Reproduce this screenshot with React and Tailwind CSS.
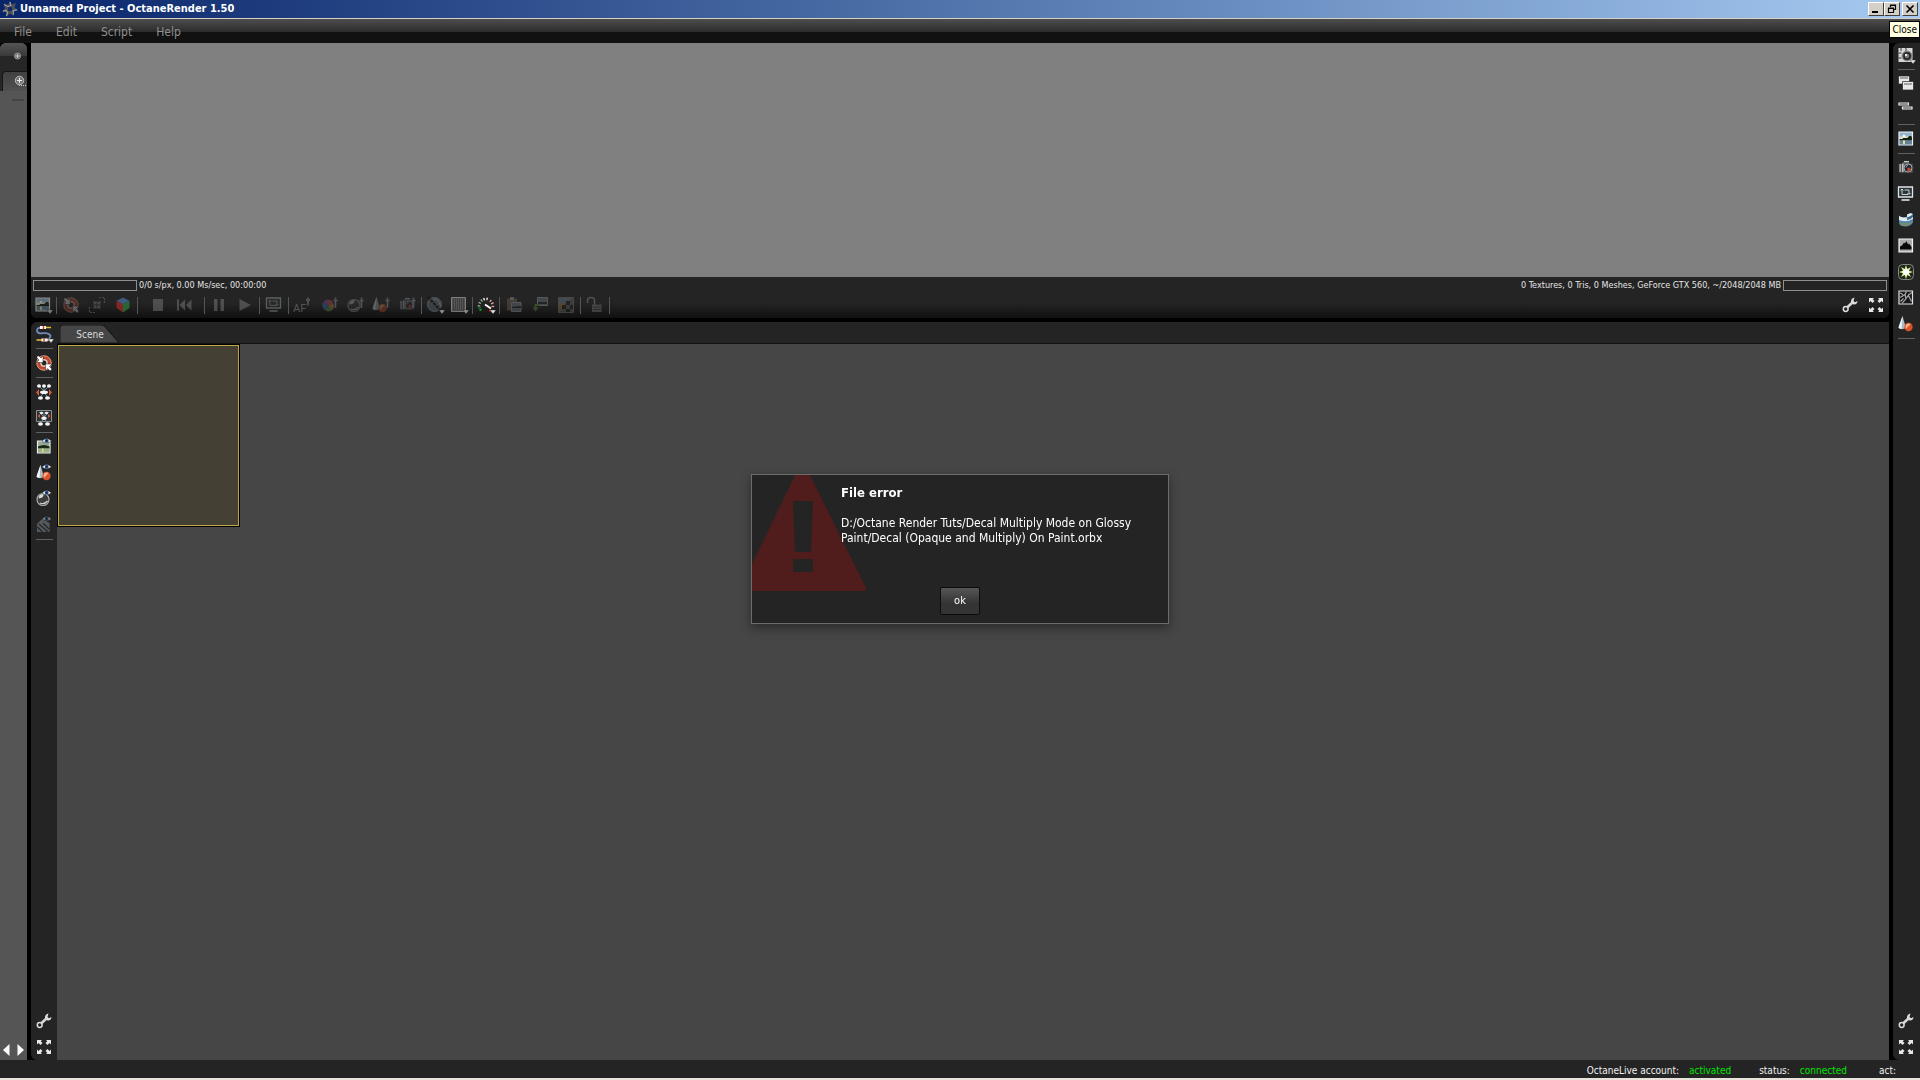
const Icon = ({ children, className = "" }) => (
  <svg viewBox="0 0 24 24" className={`h-6 w-6 shrink-0 ${className}`} aria-hidden="true">
    {children}
  </svg>
);

const Caret = () => <path d="M16 17h6l-3 4z" fill="#e8e8e8" stroke="#222" strokeWidth=".4" />;

const Eye = () => (
  <g>
    <path d="M10 6Q14.500 1 19.500 6Q14.500 9.500 10 6Z" fill="#f4f4f4" stroke="#222" strokeWidth=".5" />
    <circle cx="14.700" cy="5.700" r="1.900" fill="#24508f" />
    <circle cx="14.700" cy="5.700" r=".8" fill="#0a1020" />
  </g>
);

const Cone = ({ dx = 0 }) => (
  <g transform={`translate(${dx} 0)`}>
    <path d="M8.500 4L4.500 15.500Q7.500 18.500 12 16Z" fill="#a9bcc6" />
    <path d="M8.500 4L4.500 15.500Q5.500 17 7.500 17Z" fill="#eef5f8" />
    <circle cx="14.500" cy="15" r="4.200" fill="#d9532a" />
    <path d="M11.500 14a3.500 3.500 0 0 1 5-2l-4.500 5z" fill="#f7b08c" />
  </g>
);

const Picker = () => (
  <path d="M18.500 4.500v2M16.500 7.500h4M18.500 8v7" stroke="#b9c6d0" strokeWidth="1.600" fill="none" />
);

const Landscape = () => (
  <g>
    <path d="M5 5h13.500v13H5z" fill="#93b5cf" stroke="#f0f0f0" strokeWidth="1.200" />
    <path d="M5.600 9.500h12.300V12H5.600z" fill="#dfe3c4" />
    <path d="M5.600 12h2.700l1-1h4l2-2h2l.600 1.500v3H5.600z" fill="#15210f" />
    <path d="M5.600 13.500h12.300v3.900H5.600z" fill="#64849a" />
    <path d="M9 13.500h2V17H9z" fill="#e6dc9a" />
    <circle cx="10" cy="9" r="1.300" fill="#fff" />
  </g>
);

const Target = () => (
  <g>
    <circle cx="12" cy="12" r="5.800" fill="none" stroke="#c9482b" strokeWidth="3" />
    <circle cx="12" cy="12" r="7.300" fill="none" stroke="#f2b5a0" strokeWidth=".8" />
    <circle cx="12" cy="12" r="3.200" fill="none" stroke="#f0c9ba" strokeWidth="1.500" />
    <path
      d="M5 5h2L9 7l2-2v6.500H4.500L7 9 5 7zM19.500 19.500h-2l-2-2-2 2V13H20l-2.500 2.500 2 2z"
      fill="#fff"
      stroke="#222"
      strokeWidth=".5"
    />
  </g>
);

const Monitor = () => (
  <g fill="none" stroke="#dfe4e8">
    <path d="M4.500 5h14v10h-14z" fill="#2b3439" strokeWidth="1.300" />
    <path d="M8 7v5.500h6M6.700 8.500L8 7l1.300 1.500M10.500 8H15v4M13.500 11l1.500 1.500 1.500-1.500" strokeWidth=".9" />
    <path d="M7.500 18h8" strokeWidth="1.600" />
  </g>
);

const Camera = () => (
  <g>
    <path d="M5 7.500h3L9.500 5h5L16 7.500h3V17H5z" fill="#55585a" stroke="#2c2d2e" />
    <path d="M5.500 8h1.200v8H5.500zM8 7.500h1.500V16H8zM10 5h5v1.300h-5z" fill="#c5c5c5" />
    <circle cx="14" cy="12" r="4" fill="#1d242c" stroke="#a9a9a9" />
    <circle cx="15" cy="13.500" r="1.900" fill="#b9482e" />
    <path d="M12 11.500a2 2 0 0 1 2-2" stroke="#7fa4ca" fill="none" />
  </g>
);

const Ball = () => (
  <g>
    <circle cx="11" cy="12.500" r="6" fill="#3b3c3e" stroke="#aaa" strokeWidth="1.200" />
    <path d="M6.500 11.500a5 5 0 0 1 5-4.500q.5 4-5 4.500z" fill="#d9d9d9" />
    <path d="M8 16q4 2 7.500-2" stroke="#d0d0d0" fill="none" strokeWidth="1.300" />
  </g>
);

const Nodes = ({ boxed }) => (
  <g>
    {boxed && <path d="M4.500 4.500h15v11h-15z" fill="#303030" stroke="#8f8f8f" />}
    <path d="M12 6v6M7 6l5 5 5-5M12 12l-4 6M12 12l4 6" stroke="#6d8a99" fill="none" />
    <g fill="#f4f4f4">
      {!boxed && <ellipse cx="7" cy="6" rx="2" ry="1.700" />}
      {!boxed && <ellipse cx="12" cy="6" rx="2" ry="1.700" />}
      {!boxed && <ellipse cx="17" cy="6" rx="2" ry="1.700" />}
      {boxed && <ellipse cx="9.500" cy="7" rx="1.600" ry="1.200" />}
      {boxed && <ellipse cx="14.500" cy="7" rx="1.600" ry="1.200" />}
      <ellipse cx="12" cy="12.300" rx={boxed ? 2.8 : 4} ry="1.800" />
      <ellipse cx="8.500" cy="18" rx="2.500" ry="1.800" />
      <ellipse cx="15.500" cy="18" rx="2.500" ry="1.800" />
    </g>
    <path
      d={boxed ? "M8 8v4L5.500 10zM16 8v4l2.500-2z" : "M7 9v7l-3-3.500zM17 9v7l3-3.500z"}
      fill="#d4583f"
    />
  </g>
);

const icons = {
  preview: <><Landscape /><Caret /></>,
  target: <Target />,
  shrink: (
    <g fill="none" stroke="#a9a9a9" strokeWidth="1.200">
      <path d="M14 4.500h5.500V10M4.500 14v5.500H10" strokeDasharray="2 1" />
      <path d="M8.500 8.500l2 2M15.500 8.500l-2 2M8.500 15.500l2-2M15.500 15.500l-2-2M11 8.500V11H8.500M13 8.500V11h2.500M11 15.500V13H8.500M13 15.500V13h2.500" />
    </g>
  ),
  cube: (
    <g>
      <path d="M12 4.500l6.500 3.200-6.500 3.600-6.500-3.600z" fill="#4d80bd" />
      <path d="M5.500 7.700l6.500 3.600V19.500l-6.500-4.500z" fill="#c42c2c" />
      <path d="M18.500 7.700L12 11.300V19.500l6.500-4.500z" fill="#2c9645" />
    </g>
  ),
  stop: <path d="M7 6h10v12H7z" fill="#b5b5b5" />,
  rewind: <path d="M5 6.500h2v11H5zM13 6.500v11L7.500 12zM19.500 6.500v11L14 12z" fill="#b5b5b5" />,
  pause: <path d="M7 6h3.500v12H7zM13.500 6H17v12h-3.500z" fill="#b5b5b5" />,
  play: <path d="M6.500 6L18 12 6.500 18z" fill="#b5b5b5" />,
  monitor: <Monitor />,
  focus: (
    <g>
      <text x="2" y="19" fontSize="11" fill="#d0d0d0" fontFamily="Roboto">AF</text>
      <path d="M17 4.500v8M15 7h4" stroke="#a8bac8" strokeWidth="1.800" />
    </g>
  ),
  wheel: (
    <g>
      <path d="M11 12.500v-6a6 6 0 0 0-5 3z" fill="#b04cc4" />
      <path d="M11 12.500v-6a6 6 0 0 1 5.500 4z" fill="#d95858" />
      <path d="M11 12.500l5.500-2a6 6 0 0 1-2 7z" fill="#d8a042" />
      <path d="M11 12.500l3.500 5a6 6 0 0 1-6 0z" fill="#52b552" />
      <path d="M11 12.500l-2.500 5a6 6 0 0 1-2.500-8z" fill="#4983cf" />
      <Picker />
    </g>
  ),
  ballPick: <><Ball /><Picker /></>,
  conePick: <><Cone dx={-1} /><Picker /></>,
  cameraPick: <><Camera /><Picker /></>,
  clay: (
    <g>
      <circle cx="11.500" cy="11.500" r="7" fill="#4d565e" stroke="#747b82" />
      <path d="M5 4l14 15" stroke="#151515" strokeWidth="2" strokeDasharray="3 1" />
      <path d="M10 6q6 0 7.500 7" stroke="#8996a2" fill="none" />
      <Caret />
    </g>
  ),
  alpha: (
    <g>
      <path d="M4.500 4.500h14v14h-14z" fill="#555" stroke="#bbb" />
      <path
        d="M5 6h13M5 8h13M5 10h13M5 12h13M5 14h13M5 16h13M6 18h12"
        stroke="#999"
        strokeDasharray="1 1"
      />
      <Caret />
    </g>
  ),
  gauge: (
    <g fill="none" strokeWidth="2.600">
      <path d="M7 17.500a7 7 0 0 1-1.500-3" stroke="#16a52e" strokeDasharray="1.500 1" />
      <path d="M5 13.500a7 7 0 0 1 3.500-6.500" stroke="#8abc98" strokeDasharray="1.300 1.700" />
      <path d="M9.500 6.500a7 7 0 0 1 5.500 0" stroke="#f0f0f0" strokeDasharray="1.300 1.700" />
      <path d="M16 7.500a7 7 0 0 1 2.500 8" stroke="#e3a0a0" strokeDasharray="1.300 1.700" />
      <path d="M11 11.500l6 4" stroke="#fff" strokeWidth="2" />
      <path d="M15 17.500h2" stroke="#d22" strokeWidth="2" />
      <Caret />
    </g>
  ),
  paste: (
    <g>
      <path d="M5 5.500h10v12H5z" fill="#8b7960" />
      <path d="M8 4h4v3H8z" fill="#ccc" />
      <path d="M9.500 9.500h9.500v9H9.500z" fill="#8799a4" stroke="#ccc" />
      <path d="M10 14l9-1v2h-9z" fill="#222" />
    </g>
  ),
  load: (
    <g>
      <path d="M9.500 4.500h10v8h-10z" fill="#8799a4" stroke="#ccc" />
      <path d="M10 9h9v2h-9z" fill="#222" />
      <path d="M12 12H7.500v3" stroke="#70b04b" strokeWidth="2" fill="none" />
      <path d="M4.500 14.500h6l-3 4z" fill="#70b04b" />
    </g>
  ),
  texture: (
    <g>
      <path d="M4.500 4.500h15v15h-15z" fill="#777" stroke="#999" />
      <path d="M5 5h14L5 15z" fill="#89a7b6" />
      <path d="M5 12l8-3-8 10z" fill="#c59a35" />
      <path d="M12 8h4v4h-4zM16 12h3v4h-3zM12 16h4v3h-4zM8 12h4v4H8z" fill="#202020" />
    </g>
  ),
  unlock: (
    <g>
      <path d="M4.500 10V7.500a3.500 3 0 0 1 7 0V12" fill="none" stroke="#bbb" strokeWidth="1.500" />
      <path d="M9 11.500h9.500V19H9z" fill="#999" />
      <path d="M10 14h7.500M10 16.500h7.500" stroke="#555" />
    </g>
  ),
  wrench: (
    <g>
      <path d="M8.500 15L15 9" stroke="#d6d6d6" strokeWidth="2.600" />
      <circle cx="7.700" cy="16" r="2.400" fill="#222" stroke="#dcdcdc" strokeWidth="1.500" />
      <path
        d="M16.500 4.500Q12.500 5.500 13 9l2.500 2.500Q19 12 19.500 8L17 9.200 15.500 8z"
        fill="#dcdcdc"
      />
    </g>
  ),
  expand: (
    <path
      d="M5 5h5L8.700 6.300 10.500 8 8.500 10 6.500 8 5 9.500zM19 5v4.500L17.500 8l-2 2-2-2 1.800-1.700L14 5zM5 19v-4.500L6.500 16l2-2 2 2-1.800 1.700L10 19zM19 19h-5l1.300-1.300L13.500 16l2-2 2 2 1.500-1.500z"
      fill="#e8e8e8"
    />
  ),
  cable: (
    <g fill="none">
      <path d="M9 5.500Q4.500 6 5 9t6 2.200 7.500 2.300Q18.500 17 14 18" stroke="#7189b8" strokeWidth="1.800" />
      <path d="M4.500 18h13M9 5.500h10" stroke="#e8c03a" strokeWidth="1.600" />
      <path d="M8 5.500h6M9.500 18h6" stroke="#fff" strokeWidth="3" />
      <path d="M11.500 4v3M12 16.500v3" stroke="#d43a2a" strokeWidth="1.500" />
      <Caret />
    </g>
  ),
  nodes: <Nodes />,
  nodesBoxed: <Nodes boxed />,
  eyeImage: (
    <g>
      <path d="M5.500 6H18v12H5.500z" fill="#94aa96" stroke="#e9eee9" strokeWidth="1.200" />
      <path d="M6 11.500q6-3 11.500 0v2H6z" fill="#1a2a14" />
      <path d="M6 13.500h11.500v4H6z" fill="#9db08c" />
      <path d="M10 13.500h1.500v4H10z" fill="#dcd98d" />
      <Eye />
    </g>
  ),
  eyeCone: <><Cone /><Eye /></>,
  eyeBall: <><Ball /><Eye /></>,
  eyeMesh: (
    <g>
      <path d="M5 11l5-5 7.500 4v9H5z" fill="#8b8f92" />
      <path d="M7 11l9 8M11 10l6 6M5.500 14l5 5" stroke="#27313d" strokeWidth="1.600" />
      <Eye />
    </g>
  ),
  renderView: (
    <g>
      <path d="M4.500 5h14v14h-14z" fill="#d7d7d7" />
      <path d="M7 5v3M12 5v3M4.500 10h3M4.500 15h3M8 13l3-4" stroke="#333" />
      <circle cx="13" cy="13" r="5" fill="#444" stroke="#999" />
      <circle cx="13" cy="13" r="3" fill="#777" stroke="#111" />
      <circle cx="12" cy="12" r="1.200" fill="#eee" />
      <Caret />
    </g>
  ),
  windows: (
    <g stroke="#222" strokeWidth=".7">
      <path d="M4.500 4h11v8h-11z" fill="#e8e8e8" />
      <path d="M6 6h8" />
      <path d="M8.500 9.500h11v8.500h-11z" fill="#e8e8e8" />
      <path d="M10 12h8" />
    </g>
  ),
  bars: (
    <g fill="#333" stroke="#f0f0f0" strokeWidth="1.200">
      <path d="M5 5h9.500v2H5z" />
      <path d="M8.500 9H18v2H8.500z" />
    </g>
  ),
  image: <Landscape />,
  camera: <Camera />,
  panorama: (
    <g>
      <path d="M5 8.500q3 3 14-2.500v8.500q-3 4.500-8.500 4T5 14.500z" fill="#4f86ad" />
      <path d="M5 7.500q2 2.500 8 2V6.500l3.500-1.500 2.500 1v5q-7 4-14 1z" fill="#dfeaf0" />
      <path d="M13 9.500q4-1 6-3.500v3q-2 2.500-6 3z" fill="#3f6685" />
      <path d="M5.500 14.500q6 2 13-1-3 4.500-7.500 4.500t-5.500-3.500z" fill="#7c8b68" />
    </g>
  ),
  histogram: (
    <g>
      <path d="M5 5h13.500v13H5z" fill="#aaa" stroke="#f0f0f0" strokeWidth="1.200" />
      <path d="M6 15.500v-3l2-1 2-3 1 1L12.500 7l1.500 3.500 1-1 2.500 3.500v2.500z" fill="#080808" />
    </g>
  ),
  flare: (
    <g>
      <rect x="4.500" y="4.500" width="15" height="15" rx="4" fill="#20261c" stroke="#858a80" />
      <path
        d="M12 5l1.300 4L17 7l-2 3.700 4 1.300-4 1.300 2 3.700-3.700-2L12 19l-1.300-4L7 17l2-3.700L5 12l4-1.300L7 7l3.700 2z"
        fill="#dff5a5"
      />
      <circle cx="12" cy="12" r="2.800" fill="#fff" />
    </g>
  ),
  kernel: (
    <g>
      <path d="M5 5h13.500v13H5z" fill="#15171a" stroke="#e2e2e2" strokeWidth="1.200" />
      <path
        d="M6 7l3 1.500M6 11.500l5-3L12.500 5.500M11 8.500l1 4-4 5M12 12.500l3-4 3-2M14.500 9.500l3 6M6.500 15.500l3-3"
        stroke="#aaa"
        fill="none"
        strokeWidth="1.200"
      />
    </g>
  ),
  cone: <Cone />,
};

const viewportTools = [
  { icon: "preview", label: "Preview", menu: true, dim: "opacity-50" },
  "sep",
  { icon: "target", label: "Recenter view" },
  { icon: "shrink", label: "Reset zoom" },
  { icon: "cube", label: "Reset camera", dim: "opacity-60" },
  "sep",
  { icon: "stop", label: "Stop", space: "ml-1.5" },
  { icon: "rewind", label: "Restart", space: "mr-1.5" },
  "sep",
  { icon: "pause", label: "Pause" },
  { icon: "play", label: "Play" },
  "sep",
  { icon: "monitor", label: "Resolution lock" },
  "sep",
  { icon: "focus", label: "Focus picker" },
  { icon: "wheel", label: "White balance picker" },
  { icon: "ballPick", label: "Material picker" },
  { icon: "conePick", label: "Object picker" },
  { icon: "cameraPick", label: "Camera picker" },
  "sep",
  { icon: "clay", label: "Clay mode", menu: true, dim: "opacity-60" },
  { icon: "alpha", label: "Sub sampling", menu: true, dim: "opacity-60" },
  "sep",
  { icon: "gauge", label: "Priority", menu: true, dim: "opacity-100" },
  "sep",
  { icon: "paste", label: "Copy image" },
  { icon: "load", label: "Save image" },
  { icon: "texture", label: "Background image" },
  "sep",
  { icon: "unlock", label: "Lock viewport" },
  "sep",
];

const graphTools = [
  { icon: "cable", label: "Connections" },
  "sep",
  { icon: "target", label: "Recenter graph" },
  "sep",
  { icon: "nodes", label: "Unfold nodes" },
  { icon: "nodesBoxed", label: "Unfold selection" },
  "sep",
  { icon: "eyeImage", label: "Show textures" },
  { icon: "eyeCone", label: "Show objects" },
  { icon: "eyeBall", label: "Show materials" },
  { icon: "eyeMesh", label: "Show meshes", dim: "opacity-50" },
  "sep",
];

const sideTools = [
  { icon: "renderView", label: "Render view" },
  "sep",
  { icon: "windows", label: "Windows" },
  { icon: "bars", label: "Nodes" },
  "sep",
  { icon: "image", label: "Image" },
  "sep",
  { icon: "camera", label: "Camera" },
  { icon: "monitor", label: "Resolution" },
  { icon: "panorama", label: "Environment" },
  { icon: "histogram", label: "Imager" },
  { icon: "flare", label: "Post processing" },
  { icon: "kernel", label: "Kernel" },
  { icon: "cone", label: "Objects" },
  "sep",
];

const ToolButton = ({ icon, label, className = "" }) => (
  <button type="button" aria-label={label} className={`flex shrink-0 justify-center ${className}`}>
    <Icon>{icons[icon]}</Icon>
  </button>
);

const VerticalTools = ({ items }) => (
  <div className="flex h-full w-[26px] flex-col items-center gap-0.5 pb-px">
    {items.map((item, i) =>
      item === "sep" ? (
        <div key={i} className="h-px w-[17px] shrink-0 bg-[#606060]" />
      ) : (
        <ToolButton key={i} icon={item.icon} label={item.label} className={item.dim} />
      )
    )}
    <div className="flex-1" />
    <ToolButton icon="wrench" label="Settings" />
    <ToolButton icon="expand" label="Maximize" />
  </div>
);

const TitleBar = () => (
  <header className="flex h-[19px] shrink-0 items-center border-b border-[#d4d0c8] bg-gradient-to-r from-[#0a246a] to-[#a6caf0] pr-0.5 pl-0.5 text-white">
    <svg viewBox="0 0 16 16" className="h-4 w-4" aria-hidden="true">
      <path
        d="M8 0l1.500 3.500L14 2l-1.500 4.500L16 9l-4 1.500L11.500 15 8 12.500 4 16l.5-4.500L0 10.500l3-3L1.500 3 6 3.500z"
        fill="#4d5157"
      />
      <path d="M8 1l1 3.500-3 1L2 3.500M15 9l-4 .5.500 4M1 10l3.500-.5 1 2.500-1 3" stroke="#a9adb3" fill="none" />
      <circle cx="8" cy="8" r="2.200" fill="#10286a" />
    </svg>
    <h1 className="ml-0.5 flex-1 text-[11px] leading-4 font-bold">Unnamed Project - OctaneRender 1.50</h1>
    <div className="flex">
      {["Minimize", "Restore", "Close window"].map((label, i) => (
        <button
          key={label}
          type="button"
          aria-label={label}
          className={`h-3.5 w-4 border border-t-white border-r-[#404040] border-b-[#404040] border-l-white bg-[#d4d0c8] ${
            i === 2 ? "ml-0.5" : ""
          }`}
        >
          <svg viewBox="0 0 14 12" className="h-3 w-3.5" fill="none" stroke="#000">
            {i === 0 && <path d="M3 9h6" strokeWidth="2" />}
            {i === 1 && (
              <path d="M5.500 4V2.500h5v4H9M5 2h6M3.500 5.500h5v4h-5zM3 5h6" strokeWidth="1.200" />
            )}
            {i === 2 && <path d="M3.500 2.500l7 7M10.500 2.500l-7 7" strokeWidth="1.700" />}
          </svg>
        </button>
      ))}
    </div>
  </header>
);

const MenuBar = () => (
  <nav className="relative flex h-6 shrink-0 items-center gap-6 bg-[linear-gradient(#4e4e4e,#2b2b2b_54%,#111_54%,#111)] px-3.5 text-[12px] text-[#8f8f8f]">
    {["File", "Edit", "Script", "Help"].map((item) => (
      <button key={item} type="button" className="pt-0.5">
        {item}
      </button>
    ))}
    <div
      role="tooltip"
      className="absolute top-0.5 right-0 z-10 border border-black bg-[#ffffe1] px-0.5 text-[10px] leading-[15px] text-black"
    >
      Close
    </div>
  </nav>
);

const LeftPanel = () => (
  <aside className="flex w-[27px] shrink-0 flex-col overflow-hidden rounded-t-md bg-[#555]">
    <div className="flex h-7 shrink-0 justify-end bg-[linear-gradient(#555,#3a3a3a_45%,#262626_45%,#262626)] pt-2 pr-1">
      <svg viewBox="0 0 10 10" className="h-2.5 w-2.5">
        <circle cx="4.500" cy="5" r="3" fill="#666" stroke="#999" />
        <path d="M4.500 3v4M2.500 5h4" stroke="#ccc" />
      </svg>
    </div>
    <div className="flex h-5 shrink-0 justify-end bg-[#262626] pl-0.5">
      <div className="flex w-full justify-end rounded-tl-sm border-t border-l border-[#161616] bg-gradient-to-b from-[#414141] to-[#505050] pt-0.5">
        <svg viewBox="0 0 14 14" className="h-3.5 w-3.5">
          <circle cx="6.500" cy="6.500" r="4.200" fill="#777" stroke="#bbb" />
          <path d="M6.500 4v5M4 6.500h5" stroke="#eee" />
          <path d="M6 11.500h8" stroke="#ccc" strokeDasharray="1 1" />
        </svg>
      </div>
    </div>
    <div className="mt-2 ml-3 h-0.5 w-3 shrink-0 bg-[#444]" />
    <div className="flex-1" />
    <div className="flex h-5 items-center justify-around">
      <button type="button" aria-label="Previous">
        <svg viewBox="0 0 7 12" className="h-3 w-[7px]"><path d="M6.500 0v12L0 6z" fill="#fff" /></svg>
      </button>
      <button type="button" aria-label="Next">
        <svg viewBox="0 0 7 12" className="h-3 w-[7px]"><path d="M.5 0v12L7 6z" fill="#fff" /></svg>
      </button>
    </div>
  </aside>
);

const RenderViewport = () => (
  <section className="shrink-0 overflow-hidden rounded-b-md bg-[#242424]">
    <div className="h-[234px] bg-[#808080]" />
    <div className="flex h-4 items-center px-0.5 text-[9px] leading-3 text-[#e4e4e4]">
      <div className="h-[11px] w-[104px] border border-[#8f8f8f]" />
      <span className="ml-0.5">0/0 s/px, 0.00 Ms/sec, 00:00:00</span>
      <span className="mr-0.5 ml-auto">0 Textures, 0 Tris, 0 Meshes, GeForce GTX 560, ~/2048/2048 MB</span>
      <div className="h-[11px] w-[104px] border border-[#8f8f8f]" />
    </div>
    <div className="flex h-[25px] items-start gap-0.5 bg-gradient-to-b from-[#242424] from-40% to-[#111] pr-px pl-px">
      {viewportTools.map((item, i) =>
        item === "sep" ? (
          <div key={i} className="mt-1 h-[17px] w-px shrink-0 bg-[#555]" />
        ) : (
          <ToolButton
            key={i}
            icon={item.icon}
            label={item.label}
            className={`${item.menu ? "w-[22px]" : "w-6"} ${item.space || ""} ${item.dim || "opacity-30"}`}
          />
        )
      )}
      <div className="flex-1" />
      <ToolButton icon="wrench" label="Viewport settings" />
      <ToolButton icon="expand" label="Maximize viewport" />
    </div>
  </section>
);

const NodeGraph = () => (
  <section className="flex min-h-0 flex-1 overflow-hidden rounded-l-md bg-[#242424]">
    <VerticalTools items={graphTools} />
    <div className="flex flex-1 flex-col">
      <div className="flex h-[22px] shrink-0 items-end border-b border-[#111] pl-[3px]">
        <button type="button" className="relative h-[18px] w-[60px] pt-0.5 text-[10px] leading-4 text-[#dcdcdc]">
          <svg viewBox="0 0 60 18" className="absolute inset-0 h-full w-full" aria-hidden="true">
            <path d="M0 18V3Q0 0 3 0H41Q44 0 46 3L59 18Z" fill="#464646" stroke="#161616" />
          </svg>
          <span className="relative">Scene</span>
        </button>
      </div>
      <div className="flex-1 bg-[#464646]">
        <div className="h-[183px] w-[183px] border border-black">
          <div className="h-full w-full border border-[#c0a640] bg-[#444034]" />
        </div>
      </div>
    </div>
  </section>
);

const StatusBar = () => (
  <footer className="flex h-5 shrink-0 items-center justify-end border-b-2 border-[#e8e4dc] bg-[#242424] pt-0.5 pr-6 text-[10px] text-[#f0f0f0]">
    <span>OctaneLive account:</span>
    <span className="ml-2.5 text-[#00e600]">activated</span>
    <span className="ml-7">status:</span>
    <span className="ml-2.5 text-[#00e600]">connected</span>
    <span className="ml-8">act:</span>
  </footer>
);

const ErrorDialog = () => (
  <div className="fixed inset-0 z-20 flex items-center justify-center pt-[18px]">
    <div
      role="alertdialog"
      aria-labelledby="dialog-title"
      className="relative flex w-[418px] flex-col overflow-hidden border border-[#6c6c6c] bg-[#242424] pt-2.5 pb-2 text-white shadow-[0_4px_10px_rgba(0,0,0,0.4)]"
    >
      <svg viewBox="0 0 116 118" className="absolute top-0 left-0 h-[118px] w-[116px]" aria-hidden="true">
        <path d="M50.500-15L114 113Q115 116 112 116H-13Z" fill="#511c1c" />
        <path d="M41 26H61L59 77H43ZM41 84H61V97H41Z" fill="#242424" />
      </svg>
      <div className="relative pr-5 pl-[89px]">
        <h2 id="dialog-title" className="text-[13px] leading-4 font-bold">
          File error
        </h2>
        <p className="mt-[15px] text-[12px] leading-[15px]">
          D:/Octane Render Tuts/Decal Multiply Mode on Glossy Paint/Decal (Opaque and Multiply) On Paint.orbx
        </p>
      </div>
      <button
        type="button"
        className="relative mt-[41px] h-7 w-10 self-center rounded-xs border border-[#0c0c0c] bg-gradient-to-b from-[#575757] to-[#343434] to-60% text-[11px]"
      >
        ok
      </button>
    </div>
  </div>
);

const App = () => (
  <div className="flex h-screen flex-col bg-black font-['DejaVu_Sans_Condensed','DejaVu_Sans',sans-serif]">
    <TitleBar />
    <MenuBar />
    <main className="flex min-h-0 flex-1 gap-1">
      <LeftPanel />
      <div className="flex min-w-0 flex-1 flex-col gap-1">
        <RenderViewport />
        <NodeGraph />
      </div>
      <aside className="w-[27px] shrink-0 rounded-l-md bg-[#242424]">
        <VerticalTools items={sideTools} />
      </aside>
    </main>
    <StatusBar />
    <ErrorDialog />
  </div>
);

export default App;
